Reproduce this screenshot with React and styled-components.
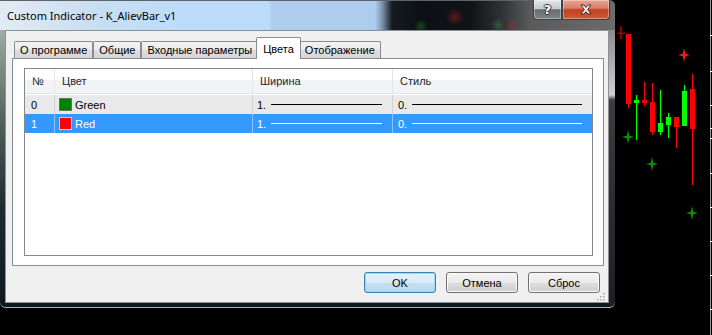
import React from 'react';
import styled, { createGlobalStyle } from 'styled-components';

const GlobalStyle = createGlobalStyle`
  html, body {
    margin: 0;
    padding: 0;
    background: #000;
  }
  body {
    font-family: "Liberation Sans", Arial, sans-serif;
    font-size: 11px;
    color: #000;
  }
`;

const tabs = ['О программе', 'Общие', 'Входные параметры', 'Цвета', 'Отображение'];

const rows = [
  { n: '0', name: 'Green', color: '#008000', edge: '#6f6f6f', width: '1.', style: '0.' },
  { n: '1', name: 'Red', color: '#ff0000', edge: '#ffb4b4', width: '1.', style: '0.', selected: true },
];

// body x, body top/bottom, wick top/bottom (coords inside the chart strip)
const candles = [
  { x: 11, bt: 34, bb: 104, wt: 34, wb: 108, c: '#ff0000' },
  { x: 19, bt: 100, bb: 103, wt: 95, wb: 140, c: '#00ff00' },
  { x: 27, bt: 100, bb: 103, wt: 82, wb: 106, c: '#ff0000' },
  { x: 35, bt: 102, bb: 132, wt: 83, wb: 135, c: '#ff0000' },
  { x: 43, bt: 123, bb: 132, wt: 90, wb: 135, c: '#00ff00' },
  { x: 51, bt: 117, bb: 125, wt: 113, wb: 138, c: '#00ff00' },
  { x: 59, bt: 117, bb: 127, wt: 117, wb: 148, c: '#ff0000' },
  { x: 67, bt: 91, bb: 126, wt: 85, wb: 126, c: '#00ff00' },
  { x: 75, bt: 89, bb: 129, wt: 74, wb: 185, c: '#ff0000' },
];

const stars = [
  { x: 69, y: 55, c: '#ff1a1a' },
  { x: 13, y: 137, c: '#0b8f0b' },
  { x: 37, y: 164, c: '#0b8f0b' },
  { x: 77, y: 213, c: '#0b8f0b' },
];

const ticks = [35, 71, 105, 128, 138, 173, 207, 241, 275, 309];

const COLS = '30px 198px 140px 1fr';

const Screen = styled.div`
  display: flex;
  width: 712px;
  height: 335px;
  background: #000;
  overflow: hidden;
`;

const Window = styled.div`
  flex: none;
  width: 615px;
  height: 308px;
  display: flex;
  flex-direction: column;
  border-radius: 0 6px 5px 5px;
  background:
    linear-gradient(180deg, #8c8c8c 30px, #cfcfcf 95px, #3c3c3c 100px, #1e1e1e 308px) right top / 6px 100% no-repeat,
    linear-gradient(180deg, #b9c5cc 0px, #849488 60px, #4c5c56 130px, #1c2a30 210px, #0e1820 308px);
  box-shadow: inset 0 -1px 0 #aab2ba;
`;

const TitleBar = styled.div`
  height: 30px;
  flex: none;
  display: flex;
  align-items: flex-start;
  padding-left: 7px;
  border-radius: 0 6px 0 0;
  background:
    radial-gradient(circle at 455px 17px, rgba(190, 30, 30, 0.45), transparent 9px),
    radial-gradient(circle at 421px 26px, rgba(40, 150, 60, 0.4), transparent 7px),
    radial-gradient(circle at 498px 25px, rgba(60, 170, 80, 0.35), transparent 7px),
    radial-gradient(circle at 512px 26px, rgba(190, 40, 40, 0.35), transparent 7px),
    linear-gradient(90deg, #e3ebf2 0px, #c9dff2 90px, #bcdcfa 180px, #bcdcfa 269px, #aecdee 272px,
      #aecdee 375px, #7d96ad 382px, #161b20 392px, #0c1014 420px, #101316 470px, #2c3032 500px,
      #5a5a5a 530px, #6b6b6b 615px);
  box-shadow: inset 0 1px 0 #5d6369;
`;

const Title = styled.span`
  margin-top: 8px;
  font-family: "Noto Sans", "Liberation Sans", sans-serif;
  font-size: 11px;
  line-height: 15px;
  color: #000;
`;

const Caption = styled.div`
  display: flex;
  margin-left: auto;
  margin-right: 5px;
`;

const CaptionButton = styled.div`
  box-sizing: border-box;
  width: ${(p) => p.$w}px;
  height: 20px;
  display: flex;
  align-items: center;
  justify-content: center;
  border: 1px solid #3d4246;
  border-top: none;
  border-radius: ${(p) => p.$radius};
  background: ${(p) => p.$bg};
  box-shadow: inset 0 0 0 1px rgba(255, 255, 255, 0.35);
`;

const HelpMark = styled.span`
  font-family: "DejaVu Sans", sans-serif;
  font-weight: bold;
  font-size: 13px;
  line-height: 13px;
  color: #fff;
  text-shadow: 1px 0 0 #2e3236, -1px 0 0 #2e3236, 0 1px 0 #2e3236, 0 -1px 0 #2e3236;
`;

const Client = styled.div`
  position: relative;
  flex: 1;
  margin: 0 6px 5px 5px;
  display: flex;
  flex-direction: column;
  padding: 6px 4px 0 6px;
  background: #f0f0f0;
  border: 1px solid #8b9197;
`;

const TabRow = styled.div`
  position: relative;
  z-index: 1;
  height: 22px;
  margin-bottom: -1px;
  padding-left: 2px;
  display: flex;
  align-items: flex-end;
`;

const Tab = styled.div`
  position: relative;
  box-sizing: border-box;
  height: ${(p) => (p.$active ? 22 : 17)}px;
  margin: ${(p) => (p.$active ? '0 -2px' : '0 0 1px 0')};
  z-index: ${(p) => (p.$active ? 2 : 1)};
  padding: 0 ${(p) => (p.$active ? 6 : 5)}px;
  display: flex;
  align-items: center;
  border: 1px solid #898c95;
  border-bottom: none;
  border-radius: 2px 2px 0 0;
  background: ${(p) =>
    p.$active ? '#fff' : 'linear-gradient(180deg, #f3f3f3 0%, #ebebeb 50%, #dedede 51%, #d6d6d6 100%)'};
  white-space: nowrap;
`;

const Panel = styled.div`
  box-sizing: border-box;
  height: 208px;
  flex: none;
  padding: 9px 10px 9px 11px;
  background: #fff;
  border: 1px solid #898c95;
`;

const List = styled.div`
  box-sizing: border-box;
  height: 100%;
  background: #fff;
  border: 1px solid #828790;
`;

const Header = styled.div`
  display: grid;
  grid-template-columns: ${COLS};
  height: 24px;
  margin-bottom: 1px;
  background: linear-gradient(180deg, #fff 0%, #fff 45%, #f2f3f5 46%, #f2f3f5 100%);
  border-bottom: 1px solid #e3e5e8;
`;

const HeadCell = styled.div`
  display: flex;
  align-items: center;
  padding-left: 7px;
  color: #1b2634;
  border-right: 1px solid #e3e5e8;
  &:last-child {
    border-right: none;
  }
`;

const Row = styled.div`
  display: grid;
  grid-template-columns: ${COLS};
  height: 19px;
  background: ${(p) => (p.$selected ? '#3399ff' : '#e9e9e9')};
  color: ${(p) => (p.$selected ? '#fff' : '#000')};
`;

const Cell = styled.div`
  display: flex;
  align-items: center;
  min-width: 0;
  padding-left: ${(p) => p.$pad}px;
  padding-right: 10px;
  border-right: 1px solid ${(p) => (p.$selected ? '#8cc6ff' : '#d2d2d2')};
  &:last-child {
    border-right: none;
  }
`;

const Swatch = styled.span`
  box-sizing: border-box;
  width: 13px;
  height: 13px;
  margin-right: 3px;
  background: ${(p) => p.$color};
  border: 1px solid ${(p) => p.$edge};
`;

const Stroke = styled.span`
  flex: 1;
  height: 1px;
  margin-left: 5px;
  background: currentColor;
`;

const ButtonRow = styled.div`
  display: flex;
  justify-content: flex-end;
  gap: 10px;
  margin-top: 6px;
  padding-right: 4px;
`;

const Button = styled.button`
  box-sizing: border-box;
  width: 72px;
  height: 21px;
  padding: 0;
  font-family: "Liberation Sans", Arial, sans-serif;
  font-size: 11px;
  color: #000;
  border-radius: 3px;
  border: 1px solid ${(p) => (p.$default ? '#3c7fb1' : '#707070')};
  background: ${(p) =>
    p.$default
      ? 'linear-gradient(180deg, #e6f2fb 0%, #d8eaf7 50%, #c6e0f2 51%, #b9d8ee 100%)'
      : 'linear-gradient(180deg, #f3f3f3 0%, #ebebeb 50%, #dddddd 51%, #cfcfcf 100%)'};
  box-shadow: inset 0 0 0 1px ${(p) => (p.$default ? '#9fd6f6' : '#fbfbfb')};
`;

const Grip = styled.svg`
  position: absolute;
  right: 3px;
  bottom: 1px;
`;

const Chart = styled.svg`
  flex: none;
  display: block;
`;

function Star({ x, y, c }) {
  return (
    <path
      d={`M${x} ${y - 7} L${x + 1.3} ${y - 1.3} L${x + 6} ${y} L${x + 1.3} ${y + 1.3} L${x} ${y + 7} L${x - 1.3} ${y + 1.3} L${x - 6} ${y} L${x - 1.3} ${y - 1.3} Z`}
      fill={c}
    />
  );
}

export default function App() {
  return (
    <>
      <GlobalStyle />
      <Screen>
        <Window>
          <TitleBar>
            <Title>Custom Indicator - K_AlievBar_v1</Title>
            <Caption>
              <CaptionButton
                $w={29}
                $radius="0 0 0 4px"
                $bg="linear-gradient(180deg, #e4e6e8 0%, #c4c8cb 45%, #656c70 52%, #7d8589 100%)"
              >
                <HelpMark>?</HelpMark>
              </CaptionButton>
              <CaptionButton
                $w={48}
                $radius="0 0 4px 0"
                $bg="linear-gradient(180deg, #e7a594 0%, #d7806a 42%, #c2401f 52%, #cf5a3a 100%)"
              >
                <svg width="12" height="11" viewBox="0 0 12 11">
                  <path
                    d="M1 1 L4 1 L6 3.5 L8 1 L11 1 L7.6 5.5 L11 10 L8 10 L6 7.5 L4 10 L1 10 L4.4 5.5 Z"
                    fill="#fff"
                    stroke="#3a1a12"
                    strokeWidth="0.9"
                  />
                </svg>
              </CaptionButton>
            </Caption>
          </TitleBar>

          <Client>
            <TabRow>
              {tabs.map((t) => (
                <Tab key={t} $active={t === 'Цвета'}>
                  {t}
                </Tab>
              ))}
            </TabRow>

            <Panel>
              <List>
                <Header>
                  <HeadCell>№</HeadCell>
                  <HeadCell>Цвет</HeadCell>
                  <HeadCell>Ширина</HeadCell>
                  <HeadCell>Стиль</HeadCell>
                </Header>
                {rows.map((r) => (
                  <Row key={r.n} $selected={r.selected}>
                    <Cell $pad={6} $selected={r.selected}>{r.n}</Cell>
                    <Cell $pad={4} $selected={r.selected}>
                      <Swatch $color={r.color} $edge={r.edge} />
                      {r.name}
                    </Cell>
                    <Cell $pad={4} $selected={r.selected}>
                      {r.width}
                      <Stroke />
                    </Cell>
                    <Cell $pad={5} $selected={r.selected}>
                      {r.style}
                      <Stroke />
                    </Cell>
                  </Row>
                ))}
              </List>
            </Panel>

            <ButtonRow>
              <Button $default>OK</Button>
              <Button>Отмена</Button>
              <Button>Сброс</Button>
            </ButtonRow>

            <Grip width="8" height="8" viewBox="0 0 8 8">
              {[[6, 0], [6, 3], [3, 3], [6, 6], [3, 6], [0, 6]].map(([x, y]) => (
                <rect key={`${x}-${y}`} x={x} y={y} width="1.5" height="1.5" fill="#a8a8a8" />
              ))}
            </Grip>
          </Client>
        </Window>

        <Chart width="97" height="335" viewBox="0 0 97 335">
          <line x1="95.5" y1="0" x2="95.5" y2="335" stroke="#9a9a9a" strokeWidth="1" />
          {ticks.map((y) => (
            <line key={y} x1="95" y1={y + 0.5} x2="97" y2={y + 0.5} stroke="#fff" strokeWidth="1" />
          ))}
          <rect x="5" y="26" width="1.5" height="13" fill="#a80000" />
          <rect x="2" y="32.5" width="8" height="1.5" fill="#a80000" />
          {candles.map((k) => (
            <g key={k.x}>
              <rect x={k.x + 2} y={k.wt} width="1.2" height={k.wb - k.wt} fill={k.c} />
              <rect x={k.x} y={k.bt} width="5" height={k.bb - k.bt} fill={k.c} />
            </g>
          ))}
          {stars.map((s) => (
            <Star key={`${s.x}-${s.y}`} {...s} />
          ))}
        </Chart>
      </Screen>
    </>
  );
}
